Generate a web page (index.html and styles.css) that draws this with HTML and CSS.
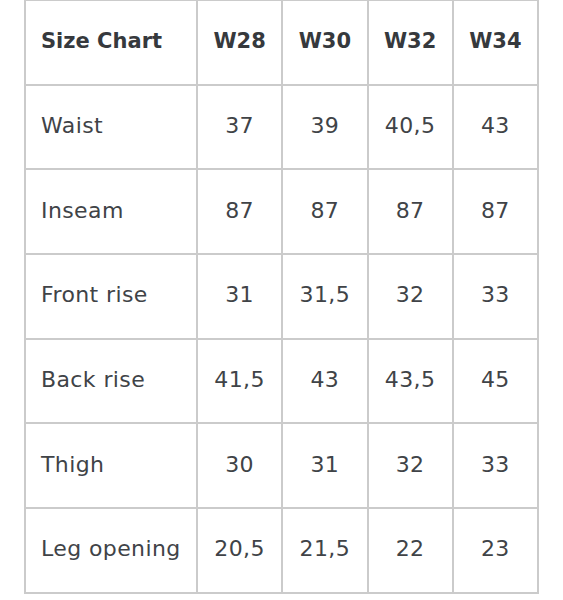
FILE: index.html
```html
<!DOCTYPE html>
<html lang="en">
<head>
    <meta charset="UTF-8">
    <meta name="viewport" content="width=device-width, initial-scale=1.0">
    <title>Size Chart</title>
    <link rel="stylesheet" href="styles.css">
</head>
<body>
    <table class="size-chart">
        <thead>
            <tr>
                <th class="label">Size Chart</th>
                <th>W28</th>
                <th>W30</th>
                <th>W32</th>
                <th>W34</th>
            </tr>
        </thead>
        <tbody>
            <tr>
                <td class="label">Waist</td>
                <td>37</td>
                <td>39</td>
                <td>40,5</td>
                <td>43</td>
            </tr>
            <tr>
                <td class="label">Inseam</td>
                <td>87</td>
                <td>87</td>
                <td>87</td>
                <td>87</td>
            </tr>
            <tr>
                <td class="label">Front rise</td>
                <td>31</td>
                <td>31,5</td>
                <td>32</td>
                <td>33</td>
            </tr>
            <tr>
                <td class="label">Back rise</td>
                <td>41,5</td>
                <td>43</td>
                <td>43,5</td>
                <td>45</td>
            </tr>
            <tr>
                <td class="label">Thigh</td>
                <td>30</td>
                <td>31</td>
                <td>32</td>
                <td>33</td>
            </tr>
            <tr>
                <td class="label">Leg opening</td>
                <td>20,5</td>
                <td>21,5</td>
                <td>22</td>
                <td>23</td>
            </tr>
        </tbody>
    </table>
</body>
</html>
```
FILE: styles.css
```css
*{
    box-sizing: border-box;
}
body{
    margin: 0;
    background-color: #fff;
    font-family: "DejaVu Sans", sans-serif;
    color: #404347;
}
.size-chart{
    border-collapse: collapse;
    table-layout: fixed;
    width: 515px;
    margin: -1px 0 0 24px;
}
.size-chart th,
.size-chart td{
    border: 2px solid #cbcbcb;
    height: 84.7px;
    padding: 0 0 3px;
    text-align: center;
    font-size: 22px;
    font-weight: normal;
    letter-spacing: 0.4px;
}
.size-chart th{
    font-size: 21px;
    font-weight: bold;
    letter-spacing: 0;
    color: #36393d;
}
.size-chart th:first-child,
.size-chart td:first-child{
    width: 172px;
}
.size-chart .label{
    text-align: left;
    padding-left: 15px;
}
```
